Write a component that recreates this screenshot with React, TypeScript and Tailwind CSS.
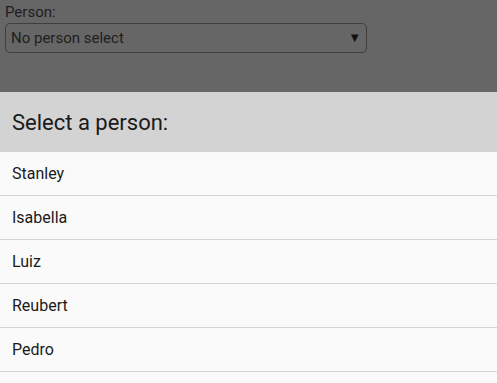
import React from 'react';

const PEOPLE = ['Stanley', 'Isabella', 'Luiz', 'Reubert', 'Pedro'];

export default function App() {
  return (
    <div className="w-[497px] h-[383px] overflow-hidden flex flex-col font-['Roboto',sans-serif] bg-[#fafafa]">
      {/* Dimmed page behind the sheet */}
      <div className="h-[92px] shrink-0 bg-[#666666] px-[5px] pt-[3px]">
        <label className="block text-[15px] leading-[18px] text-[#1e1e1e]">Person:</label>
        <div className="mt-[2px] w-[362px] h-[30px] border border-[#3f3f3f] rounded-[5px] flex items-center justify-between pl-[5px] pr-[5px]">
          <span className="text-[15px] text-[#1e1e1e]">No person select</span>
          <span className="text-[13px] text-[#111]">▼</span>
        </div>
      </div>

      {/* Bottom sheet */}
      <div className="h-[60px] shrink-0 bg-[#d3d3d3] flex items-center px-[12px]">
        <h2 className="text-[22px] text-[#1a1a1a]">Select a person:</h2>
      </div>
      <ul className="flex flex-col">
        {PEOPLE.map((name) => (
          <li
            key={name}
            className="h-[44px] shrink-0 flex items-center px-[12px] border-b border-[#d4d4d4] bg-[#fafafa] text-[16px] text-[#1a1a1a]"
          >
            {name}
          </li>
        ))}
      </ul>
    </div>
  );
}
